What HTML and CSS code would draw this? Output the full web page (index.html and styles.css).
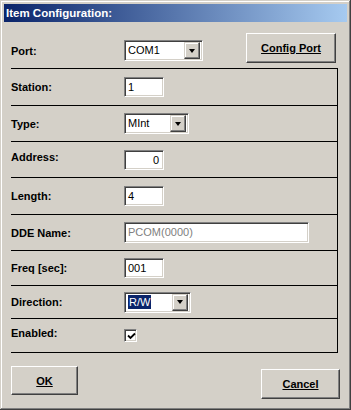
FILE: index.html
```html
<!DOCTYPE html>
<html lang="en">
<head>
  <meta charset="UTF-8">
  <title>Item Configuration</title>
  <link rel="stylesheet" href="styles.css">
</head>
<body>

  <div class="window">
    <div class="titlebar">Item Configuration:</div>

    <div class="client">
      <div class="top-row">
        <div class="port">
          <span class="label">Port:</span>
          <div class="combo combo-port">
            <span class="combo-text">COM1</span>
            <span class="drop"><span class="arrow"></span></span>
          </div>
        </div>
        <button class="btn btn-config"><u>Config Port</u></button>
      </div>

      <div class="group">
        <div class="row">
          <span class="label">Station:</span>
          <div class="field">1</div>
        </div>
        <div class="row">
          <span class="label">Type:</span>
          <div class="combo combo-type">
            <span class="combo-text">MInt</span>
            <span class="drop"><span class="arrow"></span></span>
          </div>
        </div>
        <div class="row">
          <span class="label label-up">Address:</span>
          <div class="field right">0</div>
        </div>
        <div class="row">
          <span class="label">Length:</span>
          <div class="field">4</div>
        </div>
        <div class="row">
          <span class="label">DDE Name:</span>
          <div class="field wide disabled">PCOM(0000)</div>
        </div>
        <div class="row">
          <span class="label">Freq [sec]:</span>
          <div class="field">001</div>
        </div>
        <div class="row">
          <span class="label">Direction:</span>
          <div class="combo combo-dir">
            <span class="combo-text"><span class="selected">R/W</span></span>
            <span class="drop"><span class="arrow"></span></span>
          </div>
        </div>
        <div class="row">
          <span class="label label-up">Enabled:</span>
          <div class="check">
            <svg width="9" height="9" viewBox="0 0 9 9">
              <path d="M1 3.5 L3.5 6 L8 1.5" fill="none" stroke="#000" stroke-width="1.8"/>
            </svg>
          </div>
        </div>
      </div>

      <div class="footer">
        <button class="btn btn-ok"><u>OK</u></button>
        <button class="btn btn-cancel"><u>Cancel</u></button>
      </div>
    </div>
  </div>

</body>
</html>
```

FILE: styles.css
```css
body {
  margin: 0;
  padding: 0;
  background-color: #d4d0c8;
  font-family: 'Liberation Sans', Arial, sans-serif;
  font-size: 11px;
  color: #000;
}

.window {
  width: 351px;
  height: 410px;
  box-sizing: border-box;
  padding: 4px;
  background-color: #d4d0c8;
  box-shadow: inset -1px -1px #404040, inset 1px 1px #d4d0c8,
              inset -2px -2px #808080, inset 2px 2px #fff;
  display: flex;
  flex-direction: column;
}

.titlebar {
  height: 18px;
  line-height: 18px;
  padding-left: 2px;
  background: linear-gradient(to right, #0a246a, #a6caf0);
  color: #fff;
  font-weight: bold;
  font-size: 11.5px;
}

.client {
  flex: 1;
  padding-left: 7px;
  display: flex;
  flex-direction: column;
}

.label {
  font-weight: bold;
  width: 113px;
  flex-shrink: 0;
}

.label-up {
  margin-top: -5px;
}

/* top row: port + config button */
.top-row {
  height: 46px;
  box-sizing: border-box;
  padding-top: 11px;
  display: flex;
  align-items: flex-start;
}

.port {
  display: flex;
  align-items: center;
  margin-top: 7px;
}

.btn {
  font-family: 'Liberation Sans', Arial, sans-serif;
  font-size: 11px;
  font-weight: bold;
  color: #000;
  background-color: #d4d0c8;
  border: 1px solid;
  border-color: #fff #404040 #404040 #fff;
  box-shadow: inset -1px -1px #808080, inset 1px 1px #d4d0c8;
  padding: 0;
  cursor: pointer;
}

.btn-config {
  width: 90px;
  height: 30px;
  margin-left: auto;
  margin-right: 11px;
}

/* group with separator lines */
.group {
  width: 327px;
  box-sizing: border-box;
  border-top: 1px solid #000;
  border-right: 1px solid #000;
}

.row {
  height: 36px;
  box-sizing: border-box;
  border-bottom: 1px solid #000;
  display: flex;
  align-items: center;
}

.row:nth-child(1), .row:nth-child(4) { height: 37px; }
.row:nth-child(6) { height: 35px; }
.row:nth-child(7) { height: 33px; }
.row:nth-child(8) { height: 34px; }

/* sunken controls */
.field, .combo, .check {
  box-sizing: border-box;
  background-color: #fff;
  border: 1px solid;
  border-color: #808080 #fff #fff #808080;
  box-shadow: inset 1px 1px #404040, inset -1px -1px #d4d0c8;
}

.field {
  width: 40px;
  height: 20px;
  line-height: 18px;
  padding: 0 3px;
}

.field.right {
  text-align: right;
  padding-right: 4px;
}

.field.wide {
  width: 185px;
  height: 21px;
  line-height: 19px;
}

.field.disabled {
  color: #808080;
}

.combo {
  height: 21px;
  display: flex;
  align-items: center;
  padding: 2px;
}

.combo-port { width: 79px; }
.combo-type { width: 65px; }
.combo-dir { width: 67px; }

.combo-text {
  flex: 1;
  padding-left: 1px;
  line-height: 15px;
}

.selected {
  background-color: #0a246a;
  color: #fff;
  padding: 1px 1px;
}

.drop {
  width: 16px;
  height: 17px;
  box-sizing: border-box;
  background-color: #d4d0c8;
  border: 1px solid;
  border-color: #d4d0c8 #404040 #404040 #d4d0c8;
  box-shadow: inset -1px -1px #808080, inset 1px 1px #fff;
  display: flex;
  align-items: center;
  justify-content: center;
}

.arrow {
  width: 0;
  height: 0;
  border-left: 3.5px solid transparent;
  border-right: 3.5px solid transparent;
  border-top: 4px solid #000;
}

.check {
  width: 13px;
  height: 13px;
  display: flex;
  align-items: center;
  justify-content: center;
  padding: 1px 0 0 1px;
}

/* bottom buttons */
.footer {
  display: flex;
  justify-content: space-between;
  align-items: flex-start;
  padding-right: 7px;
}

.btn-ok {
  width: 67px;
  height: 29px;
  margin-top: 13px;
}

.btn-cancel {
  width: 79px;
  height: 30px;
  margin-top: 16px;
}
```
